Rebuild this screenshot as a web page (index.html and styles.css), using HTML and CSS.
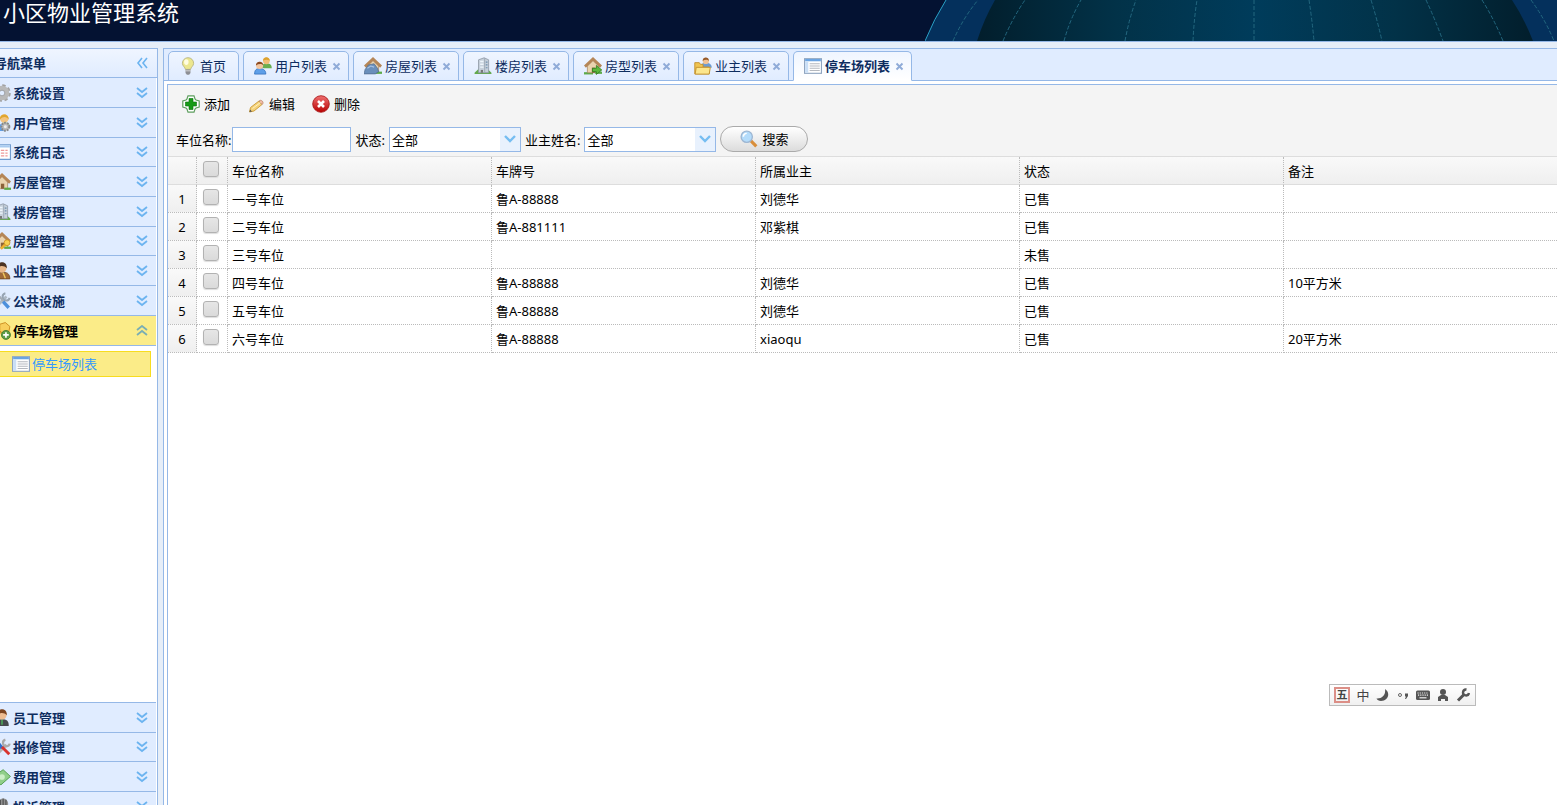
FILE: index.html
```html
<!DOCTYPE html>
<html lang="zh-CN">
<head>
    <meta charset="UTF-8">
    <meta name="viewport" content="width=device-width, initial-scale=1.0">
    <title>小区物业管理系统</title>
    <link rel="stylesheet" href="styles.css">
</head>
<body>

    <!-- shared icons -->
    <svg class="sprite" aria-hidden="true">
        <defs>
            <linearGradient id="redBall" x1="0" y1="0" x2="0" y2="1">
                <stop offset="0" stop-color="#f07070"/>
                <stop offset="1" stop-color="#b80000"/>
            </linearGradient>
            <linearGradient id="globeFill">
                <stop offset="0" stop-color="#021e2c"/>
                <stop offset="0.25" stop-color="#023248"/>
                <stop offset="0.5" stop-color="#003c5b"/>
                <stop offset="0.75" stop-color="#023248"/>
                <stop offset="1" stop-color="#021e2c"/>
            </linearGradient>
        </defs>
        <symbol id="down" viewBox="0 0 12 12"><path d="M1 1l5 4 5-4M1 6l5 4 5-4" fill="none" stroke="#6cb4f0" stroke-width="1.8"/></symbol>
        <symbol id="up" viewBox="0 0 12 12"><path d="M1 5l5-4 5 4M1 10l5-4 5 4" fill="none" stroke="#79aeb4" stroke-width="1.8"/></symbol>
        <symbol id="left" viewBox="0 0 12 12"><path d="M6 1L2 6l4 5M11 1L7 6l4 5" fill="none" stroke="#6cb4f0" stroke-width="1.6"/></symbol>
        <symbol id="arrow" viewBox="0 0 12 12"><path d="M1 3l5 5 5-5" fill="none" stroke="#75bdf2" stroke-width="2.4"/></symbol>
        <symbol id="close" viewBox="0 0 9 9"><path d="M1.500 1.500l6 6M7.500 1.500l-6 6" stroke="#8fabd8" stroke-width="1.900"/></symbol>
        <symbol id="bulb" viewBox="0 0 16 16">
            <path d="M8 .6a5 5 0 0 0-5 5c0 2.400 2.500 3.400 2.700 5.400h4.600c.2-2 2.700-3 2.700-5.400a5 5 0 0 0-5-5z" fill="#ece78f" stroke="#b9b680" stroke-width=".8"/>
            <ellipse cx="6.500" cy="4.500" rx="2" ry="2.500" fill="#fffde0"/>
            <path d="M5.800 11h4.400v3.200L9 15.700H7l-1.200-1.500z" fill="#8d8f94"/>
            <path d="M5.800 12.300h4.400" stroke="#ddd" stroke-width=".8"/>
        </symbol>
        <symbol id="users" viewBox="0 0 16 16">
            <path d="M7 9.500c0-3 2-4 4-4s4.800.5 4.800 4.500H9z" fill="#69ae50"/>
            <circle cx="11" cy="3.400" r="3" fill="#f1bd77"/><path d="M8 3.400C8-.9 14-.9 14 3.400 12.500 2 10 2 8 3.400z" fill="#dca22e"/>
            <path d="M.5 15.200c0-4 2-5 4.500-5s5.500 1 5.500 5z" fill="#5e9fe8" stroke="#2f6fbd" stroke-width=".7"/>
            <circle cx="5" cy="7.500" r="3.200" fill="#f3c6a0"/><path d="M1.700 7.500C1.500 3 8.500 3 8.300 7.500 7 5.800 4 5.800 1.700 7.500z" fill="#8a4a22"/>
        </symbol>
        <symbol id="house" viewBox="0 0 16 16">
            <path d="M3 8l5-5 5 5v6H3z" fill="#ead3ae" stroke="#9d7e58" stroke-width=".6"/>
            <path d="M.8 8.500L8 1.800l7.200 6.700" fill="none" stroke="#b58657" stroke-width="2.600"/>
            <path d="M7 9.500h3V14H7z" fill="#8b6239"/>
            <path d="M10 13h6v2h-6z" fill="#5dab48"/>
        </symbol>
        <symbol id="houseBlue" viewBox="0 0 16 16">
            <use href="#house"/>
            <path d="M0 15l1-4 3-4 5-1 3 4 1 3-3 2z" fill="#6a8fbb" stroke="#4a6688" stroke-width=".6"/>
            <path d="M3 10l3-2 3 1" fill="none" stroke="#a9c2e0"/>
        </symbol>
        <symbol id="houseGo" viewBox="0 0 16 16">
            <path d="M0 13.500h8v2H0z" fill="#5dab48"/>
            <use href="#house"/>
            <path d="M7.500 10h3.500V7.500l4.800 4-4.800 4V13H7.500z" fill="#5cb83c" stroke="#2f7c1c" stroke-width=".7"/>
        </symbol>
        <symbol id="houseKey" viewBox="0 0 16 16">
            <use href="#house"/>
            <path d="M7 15l5-5" stroke="#eeb02c" stroke-width="2.200"/><circle cx="12.500" cy="9.500" r="2.600" fill="#f8cf4e" stroke="#c78a1a" stroke-width=".7"/>
        </symbol>
        <symbol id="building" viewBox="0 0 16 16">
            <path d="M.5 14l3-3h9l3 3v1H.5z" fill="#63a94d"/>
            <path d="M4 2.500l5-1.800 4 1.800V14H4z" fill="#c6d0db" stroke="#8c97a3" stroke-width=".7"/>
            <path d="M9.500 1v13" stroke="#9aa6b3" stroke-width=".8"/>
            <path d="M5.500 4h3M5.500 6.500h3M5.500 9h3" stroke="#eef5fc" stroke-width="1.300"/>
            <path d="M10.500 4.500h1.500M10.500 7h1.500M10.500 9.500h1.500" stroke="#6d8dae"/>
            <path d="M6 11.500h2V14H6z" fill="#777"/>
        </symbol>
        <symbol id="folderUser" viewBox="0 0 16 16">
            <path d="M6 9c0-3 2-4 4.500-4s5.300 1 5.300 4.500z" fill="#6e9bd0"/>
            <circle cx="10.500" cy="3.500" r="2.800" fill="#f1c193"/><path d="M7.700 3.500C7.700-.6 13.300-.6 13.300 3.500 12 2 9.500 2 7.700 3.500z" fill="#955a2a"/>
            <path d="M.7 15V5h4l1 1.500h2.300V9h5.500v6z" fill="#f0c450" stroke="#c28e2a" stroke-width=".8"/>
            <path d="M1 15.200l1-6h12.500l-1 6z" fill="#fce68c" stroke="#c28e2a" stroke-width=".8"/>
        </symbol>
        <symbol id="list" viewBox="0 0 16 16">
            <rect x=".5" y="1.500" width="15" height="13" fill="#fff" stroke="#8fa4c0"/>
            <path d="M1 2.800h14" stroke="#6ba4e2" stroke-width="2"/>
            <path d="M1 4h2.800v10H1z" fill="#c9def6"/>
            <path d="M5 6h9M5 8h9M5 10h9M5 12h9" stroke="#b4b8bf" stroke-width=".9"/>
        </symbol>
        <symbol id="gear" viewBox="0 0 16 16">
            <circle cx="8" cy="8" r="6.300" fill="none" stroke="#a2a2a2" stroke-width="3" stroke-dasharray="2.800 2.150"/>
            <circle cx="8" cy="8" r="4.500" fill="none" stroke="#b9b9b9" stroke-width="4"/>
            <circle cx="8" cy="8" r="2.500" fill="#e0ecff" stroke="#8f8f8f" stroke-width=".7"/>
        </symbol>
        <symbol id="userGear" viewBox="0 0 16 16">
            <path d="M0 15c0-5 3-6 6-6s5 1 5 6z" fill="#5e9fe8"/>
            <path d="M8 8c4-1 7 0 7 4H8z" fill="#69ae50"/>
            <circle cx="10" cy="4" r="3.800" fill="#f3c480"/><path d="M6 5C6-1 14-1 14 5 12 2 9 2 6 5z" fill="#e0a630"/>
            <circle cx="11" cy="11.300" r="3.500" fill="#bbb" stroke="#888" stroke-width="1.800" stroke-dasharray="1.500 1"/>
            <circle cx="11" cy="11.300" r="1.300" fill="#eee"/>
        </symbol>
        <symbol id="log" viewBox="0 0 16 16">
            <path d="M.5 1.500h15v13H.5z" fill="#fff" stroke="#6f9bd0"/>
            <path d="M1 3h14" stroke="#a9cbf0" stroke-width="2"/>
            <path d="M3 6.500h10M3 9h10M3 11.500h10" stroke="#e99" stroke-width="1.200" stroke-dasharray="3 1"/>
        </symbol>
        <symbol id="owner" viewBox="0 0 16 16">
            <path d="M1 15c0-5 3-6 7-6s7 1 7 6z" fill="#a06a38" stroke="#6e431c" stroke-width=".7"/>
            <circle cx="8" cy="5.500" r="4" fill="#eab98a"/><path d="M3.700 5.500C3-1.500 13-1.500 12.300 5.500 10 3 6 3 3.700 5.500z" fill="#4c3322"/>
            <path d="M9 9.500l2 5" stroke="#edc65c" stroke-width="1.300"/>
        </symbol>
        <symbol id="tools" viewBox="0 0 16 16">
            <path d="M2 14L12 4" stroke="#aeb9c4" stroke-width="2.400"/>
            <path d="M11 1.200a3.200 3.200 0 1 0 3.800 4" fill="none" stroke="#97a4b2" stroke-width="1.800"/>
            <path d="M4 2l6 7" stroke="#a5adb6" stroke-width="1.800"/><path d="M9 8.500l5 5.500" stroke="#4b8fdc" stroke-width="3"/>
        </symbol>
        <symbol id="keyAdd" viewBox="0 0 16 16">
            <path d="M1 14l7-7" stroke="#e8ab2c" stroke-width="3"/>
            <path d="M6 2l5-1.500L15 4l-1 5-4 2-4-3z" fill="#f8cf5c" stroke="#c98a1c" stroke-width=".8"/>
            <circle cx="11.500" cy="11.500" r="4" fill="#5d9d46" stroke="#38732a" stroke-width=".7"/><path d="M9 11.500h5M11.500 9v5" stroke="#fff" stroke-width="1.500"/>
        </symbol>
        <symbol id="staff" viewBox="0 0 16 16">
            <path d="M1 15c0-5 3-6 7-6s6 1 6 6z" fill="#474a4e"/>
            <circle cx="8" cy="5.500" r="4" fill="#eebc91"/><path d="M3.700 5.500C3-1.500 13-1.500 12.300 5.500 10 3 6 3 3.700 5.500z" fill="#7d4420"/>
            <path d="M8 9.500V14" stroke="#4da35a" stroke-width="1.500"/>
        </symbol>
        <symbol id="repair" viewBox="0 0 16 16">
            <path d="M3 15L12 6" stroke="#b5b5b5" stroke-width="2.400"/>
            <path d="M11 1.500a3 3 0 1 0 3.800 3.500" fill="none" stroke="#aaa" stroke-width="2"/>
            <path d="M5 5l3 4" stroke="#2f6fd0" stroke-width="3"/><path d="M8 8l6.500 6.500" stroke="#d8342e" stroke-width="2.600"/>
        </symbol>
        <symbol id="money" viewBox="0 0 16 16">
            <path d="M0 8l9-6.500 6.500 6L7 15z" fill="#91cf8a" stroke="#4d9b48" stroke-width=".8"/>
            <circle cx="8" cy="8" r="2.500" fill="#cdeec7"/>
        </symbol>
        <symbol id="complain" viewBox="0 0 16 16">
            <path d="M3 15c0-4 2-6 6-6s6 2 6 6z" fill="#777"/>
            <circle cx="9" cy="5" r="4.500" fill="#909090"/><path d="M9 .5v9M6.500 1.500v7M11.500 1.500v7" stroke="#484848" stroke-width=".9"/>
        </symbol>
        <symbol id="add" viewBox="0 0 18 18">
            <path d="M6 .8h6l1 3.200 1 1 3.200 1v6L14 13l-1 1-1 3.200H6L5 14l-1-1-3.200-1V6L4 5l1-1z" fill="#fff" stroke="#5f9f5f" stroke-width="1.200"/>
            <path d="M7 3.500h4V7h3.500v4H11v3.500H7V11H3.500V7H7z" fill="#169a16" stroke="#08720a" stroke-width=".6"/>
        </symbol>
        <symbol id="pencil" viewBox="0 0 18 18">
            <path d="M2.500 17l1-4.500L12 6l3 3.500-8 6.500z" fill="#f4d27a" stroke="#c99834" stroke-width=".9"/>
            <path d="M12 6l3 3.500 1-1.200c.5-1.500-1.300-3.300-2.800-3z" fill="#f2b9a8" stroke="#bd8a6a" stroke-width=".8"/>
            <path d="M5.500 13.500l8-6" stroke="#fff0bd"/><path d="M2.500 17l.6-2.500 1.900 2z" fill="#555"/>
        </symbol>
        <symbol id="delete" viewBox="0 0 18 18">
            <circle cx="9" cy="9" r="8.300" fill="url(#redBall)" stroke="#a51010" stroke-width=".8"/>
            <path d="M6 6l6 6M12 6l-6 6" stroke="#fff" stroke-width="2.600"/>
        </symbol>
        <symbol id="search" viewBox="0 0 16 16">
            <path d="M9.500 9.500l5 5" stroke="#d98e3a" stroke-width="2.800"/>
            <circle cx="6" cy="6" r="5" fill="#b4dcfb" stroke="#9db6d2" stroke-width="1.200"/>
            <path d="M3 6a3 3 0 0 1 3-3" fill="none" stroke="#fff" stroke-width="1.300"/>
        </symbol>
    </svg>

    <header class="header">
        <h1>小区物业管理系统</h1>
        <svg class="globe" viewBox="0 0 632 41" aria-hidden="true">
            <path d="M0 41Q9 19 21 0H632V41z" fill="#04305c"/>
            <path d="M0 41Q9 19 21 0" fill="none" stroke="#2a9fc4"/>
            <path d="M52 41Q59 19 70 0H587Q599 18 608 41z" fill="url(#globeFill)"/>
            <path d="M28 41Q38 18 53 0M78 41Q87 19 100 0M139 41Q145 19 156 0M200 41Q204 19 211 0M268 41Q269 19 272 0M329 0V41M384 0Q387 19 389 41M446 0Q452 19 457 41M501 0Q510 19 518 41M557 0Q569 19 578 41M606 0Q620 19 629 41" fill="none" stroke="#23677f" stroke-dasharray="4 2"/>
        </svg>
    </header>

    <div class="layout">
        <nav class="sidebar">
            <div class="sidebar-title">导航菜单<svg class="chevron"><use href="#left"/></svg></div>
            <div class="accordion">
                <button class="item"><svg class="icon"><use href="#gear"/></svg>系统设置<svg class="chevron"><use href="#down"/></svg></button>
                <button class="item"><svg class="icon"><use href="#userGear"/></svg>用户管理<svg class="chevron"><use href="#down"/></svg></button>
                <button class="item"><svg class="icon"><use href="#log"/></svg>系统日志<svg class="chevron"><use href="#down"/></svg></button>
                <button class="item"><svg class="icon"><use href="#house"/></svg>房屋管理<svg class="chevron"><use href="#down"/></svg></button>
                <button class="item"><svg class="icon"><use href="#building"/></svg>楼房管理<svg class="chevron"><use href="#down"/></svg></button>
                <button class="item"><svg class="icon"><use href="#houseKey"/></svg>房型管理<svg class="chevron"><use href="#down"/></svg></button>
                <button class="item"><svg class="icon"><use href="#owner"/></svg>业主管理<svg class="chevron"><use href="#down"/></svg></button>
                <button class="item"><svg class="icon"><use href="#tools"/></svg>公共设施<svg class="chevron"><use href="#down"/></svg></button>
                <button class="item selected"><svg class="icon"><use href="#keyAdd"/></svg>停车场管理<svg class="chevron"><use href="#up"/></svg></button>
                <div class="submenu">
                    <a href="#"><svg class="icon"><use href="#list"/></svg>停车场列表</a>
                </div>
                <button class="item"><svg class="icon"><use href="#staff"/></svg>员工管理<svg class="chevron"><use href="#down"/></svg></button>
                <button class="item"><svg class="icon"><use href="#repair"/></svg>报修管理<svg class="chevron"><use href="#down"/></svg></button>
                <button class="item"><svg class="icon"><use href="#money"/></svg>费用管理<svg class="chevron"><use href="#down"/></svg></button>
                <button class="item"><svg class="icon"><use href="#complain"/></svg>投诉管理<svg class="chevron"><use href="#down"/></svg></button>
            </div>
        </nav>

        <main class="center">
            <div class="tabs">
                <button class="tab home"><svg class="icon"><use href="#bulb"/></svg>首页</button>
                <button class="tab"><svg class="icon"><use href="#users"/></svg>用户列表<svg class="close"><use href="#close"/></svg></button>
                <button class="tab"><svg class="icon"><use href="#houseBlue"/></svg>房屋列表<svg class="close"><use href="#close"/></svg></button>
                <button class="tab"><svg class="icon"><use href="#building"/></svg>楼房列表<svg class="close"><use href="#close"/></svg></button>
                <button class="tab"><svg class="icon"><use href="#houseGo"/></svg>房型列表<svg class="close"><use href="#close"/></svg></button>
                <button class="tab"><svg class="icon"><use href="#folderUser"/></svg>业主列表<svg class="close"><use href="#close"/></svg></button>
                <button class="tab active"><svg class="icon"><use href="#list"/></svg>停车场列表<svg class="close"><use href="#close"/></svg></button>
            </div>

            <div class="content">
                <div class="panel">
                    <div class="toolbar">
                        <div class="actions">
                            <button class="action"><svg class="icon"><use href="#add"/></svg>添加</button>
                            <button class="action"><svg class="icon"><use href="#pencil"/></svg>编辑</button>
                            <button class="action"><svg class="icon"><use href="#delete"/></svg>删除</button>
                        </div>
                        <form class="filters" onsubmit="return false">
                            <div class="field name-field">
                                <label for="carportName">车位名称:</label>
                                <input type="text" id="carportName">
                            </div>
                            <div class="field">
                                <label for="status">状态:</label>
                                <div class="combo">
                                    <select id="status"><option>全部</option><option>已售</option><option>未售</option></select>
                                    <svg><use href="#arrow"/></svg>
                                </div>
                            </div>
                            <div class="field">
                                <label for="owner-name">业主姓名:</label>
                                <div class="combo">
                                    <select id="owner-name"><option>全部</option></select>
                                    <svg><use href="#arrow"/></svg>
                                </div>
                            </div>
                            <button class="search-btn"><svg class="icon"><use href="#search"/></svg>搜索</button>
                        </form>
                    </div>

                    <table class="grid">
                        <colgroup>
                            <col class="col-num"><col class="col-check"><col class="col-data"><col class="col-data"><col class="col-data"><col class="col-data"><col>
                        </colgroup>
                        <thead>
                            <tr>
                                <th></th>
                                <th><input type="checkbox" aria-label="全选"></th>
                                <th>车位名称</th>
                                <th>车牌号</th>
                                <th>所属业主</th>
                                <th>状态</th>
                                <th>备注</th>
                            </tr>
                        </thead>
                        <tbody>
                            <tr><td>1</td><td><input type="checkbox" aria-label="1"></td><td>一号车位</td><td>鲁A-88888</td><td>刘德华</td><td>已售</td><td></td></tr>
                            <tr><td>2</td><td><input type="checkbox" aria-label="2"></td><td>二号车位</td><td>鲁A-881111</td><td>邓紫棋</td><td>已售</td><td></td></tr>
                            <tr><td>3</td><td><input type="checkbox" aria-label="3"></td><td>三号车位</td><td></td><td></td><td>未售</td><td></td></tr>
                            <tr><td>4</td><td><input type="checkbox" aria-label="4"></td><td>四号车位</td><td>鲁A-88888</td><td>刘德华</td><td>已售</td><td>10平方米</td></tr>
                            <tr><td>5</td><td><input type="checkbox" aria-label="5"></td><td>五号车位</td><td>鲁A-88888</td><td>刘德华</td><td>已售</td><td></td></tr>
                            <tr><td>6</td><td><input type="checkbox" aria-label="6"></td><td>六号车位</td><td>鲁A-88888</td><td>xiaoqu</td><td>已售</td><td>20平方米</td></tr>
                        </tbody>
                    </table>
                </div>
            </div>
        </main>
    </div>

    <!-- input method bar -->
    <div class="ime">
        <span class="ime-logo">五</span>
        <span class="ime-mode">中</span>
        <svg viewBox="0 0 14 14"><path d="M9 1c6 4 3 12-4 12-2 0-4-1-4.500-2.500C6 11 10 7 9 1z" fill="#555"/></svg>
        <svg viewBox="0 0 14 14"><circle cx="4" cy="7" r="1.500" fill="none" stroke="#666"/><path d="M9 5.500h3V8l-2 3H9l1-2.500H9z" fill="#555"/></svg>
        <svg viewBox="0 0 14 14"><rect x="0" y="2.500" width="14" height="9.500" rx="1.500" fill="#555"/><path d="M1.500 5h11M2 7.200h11" stroke="#eee" stroke-width="1.200" stroke-dasharray="1.200 1"/><path d="M3.500 9.800h7" stroke="#eee" stroke-width="1.200"/></svg>
        <svg viewBox="0 0 14 14"><circle cx="7" cy="4" r="3" fill="#555"/><path d="M2 13V9l3-2h4l3 2v4H9v-2H5v2z" fill="#555"/></svg>
        <svg viewBox="0 0 14 14"><path d="M2 12.500l6-6" stroke="#555" stroke-width="3"/><path d="M10.500 1.500a3 3 0 1 0 2.500 3.500" fill="none" stroke="#555" stroke-width="2.400"/></svg>
    </div>

</body>
</html>
```
FILE: styles.css
```css
* {
    box-sizing: border-box;
}

body {
    margin: 0;
    height: 100vh;
    overflow: hidden;
    display: flex;
    flex-direction: column;
    background-color: #fff;
    color: #000;
    font: 13px/18px "Noto Sans", "Noto Sans CJK SC", sans-serif;
}

button, input, select {
    font: inherit;
    color: inherit;
    margin: 0;
}

button {
    cursor: pointer;
}

svg {
    flex: none;
}

.sprite {
    position: absolute;
    width: 0;
    height: 0;
}

.icon {
    width: 18px;
    height: 18px;
}

/* Header */
.header {
    flex: none;
    height: 42px;
    display: flex;
    justify-content: space-between;
    background-color: #041232;
    border-bottom: 1px solid #95b8e7;
    overflow: hidden;
}

.header h1 {
    margin: 0;
    padding-left: 3px;
    color: #fff;
    font-size: 22px;
    font-weight: normal;
    line-height: 24px;
}

.globe {
    width: 632px;
    height: 41px;
}

/* Layout */
.layout {
    flex: 1;
    min-height: 0;
    display: flex;
    gap: 5px;
    padding-top: 6px;
    background-color: #e6eef8;
}

/* Sidebar */
.sidebar {
    flex: none;
    width: 170px;
    margin-left: -12px;
    display: flex;
    flex-direction: column;
    background-color: #fff;
    border: 1px solid #95b8e7;
    border-bottom: none;
}

.sidebar-title {
    flex: none;
    height: 29px;
    display: flex;
    align-items: center;
    padding: 0 9px 0 5px;
    background: linear-gradient(to bottom, #eff5ff, #e0ecff);
    border-bottom: 1px solid #95b8e7;
    color: #0e2d5f;
    font-weight: bold;
}

.chevron {
    width: 12px;
    height: 12px;
    margin-left: auto;
}

.accordion {
    flex: 1;
    min-height: 0;
    margin-right: 1px;
    overflow: hidden;
}

.item {
    width: 100%;
    height: 30px;
    display: flex;
    align-items: center;
    padding: 0 8px 0 4px;
    background-color: #e0ecff;
    border: none;
    border-bottom: 1px solid #95b8e7;
    color: #0e2d5f;
    font-weight: bold;
}

.item:nth-child(3n) {
    height: 29px;
}

.item.selected {
    height: 30px;
    background-color: #fbec88;
    color: #000;
}

.item .icon {
    margin-right: 2px;
}

.submenu {
    height: calc(100vh - 448px);
    padding: 5px 5px 0 0;
    border-bottom: 1px solid #95b8e7;
}

.submenu a {
    height: 26px;
    display: flex;
    align-items: center;
    gap: 2px;
    padding-left: 22px;
    background-color: #fbec88;
    border: 1px solid #f7dc1f;
    color: #3399ff;
    text-decoration: none;
}

/* Tabs */
.center {
    flex: 1;
    min-width: 0;
    display: flex;
    flex-direction: column;
    background-color: #fff;
    border-top: 1px solid #95b8e7;
    border-left: 1px solid #95b8e7;
}

.tabs {
    flex: none;
    height: 32px;
    display: flex;
    gap: 4px;
    padding: 2px 0 0 4px;
    background-color: #e0ecff;
    border-bottom: 1px solid #95b8e7;
}

.tab {
    height: 30px;
    display: flex;
    align-items: center;
    padding: 0 7px 0 10px;
    background: linear-gradient(to bottom, #eff5ff, #e0ecff);
    border: 1px solid #95b8e7;
    border-radius: 5px 5px 0 0;
    color: #0e2d5f;
    white-space: nowrap;
}

.tab.home {
    padding-right: 12px;
}

.tab.active {
    background: linear-gradient(to bottom, #eff5ff, #fff);
    border-bottom-color: #fff;
    font-weight: bold;
}

.tab .icon {
    margin-right: 3px;
}

.close {
    width: 9px;
    height: 9px;
    margin-left: 5px;
}

/* Content */
.content {
    flex: 1;
    padding: 3px 0 0 3px;
}

.panel {
    height: 100%;
    border-top: 1px solid #95b8e7;
    border-left: 1px solid #95b8e7;
}

.toolbar {
    height: 71px;
    padding: 8px 8px 0;
    background-color: #f4f4f4;
}

.actions {
    display: flex;
    gap: 17px;
    padding-left: 6px;
}

.action {
    height: 22px;
    display: flex;
    align-items: center;
    gap: 4px;
    padding: 0;
    background: none;
    border: none;
}

.filters {
    display: flex;
    align-items: flex-end;
    gap: 4px;
    margin-top: 11px;
}

.field {
    display: flex;
    align-items: center;
    gap: 4px;
}

.name-field {
    gap: 1px;
}

.field input {
    width: 119px;
    height: 25px;
    padding: 0 3px;
    background-color: #fff;
    border: 1px solid #95b8e7;
}

.combo {
    position: relative;
}

.combo select {
    display: block;
    width: 132px;
    height: 25px;
    padding: 0 24px 0 2px;
    background: linear-gradient(#e8f1fd, #e8f1fd) right / 20px 100% no-repeat #fff;
    border: 1px solid #95b8e7;
    border-radius: 0;
    appearance: none;
}

.combo svg {
    position: absolute;
    top: 6px;
    right: 5px;
    width: 12px;
    height: 12px;
    pointer-events: none;
}

.search-btn {
    width: 88px;
    height: 26px;
    display: flex;
    align-items: center;
    justify-content: center;
    gap: 4px;
    padding: 0;
    background: linear-gradient(to bottom, #fff, #dcdcdc);
    border: 1px solid #aaa;
    border-radius: 13px;
}

/* Data grid */
.grid {
    width: 100%;
    table-layout: fixed;
    border-collapse: separate;
    border-spacing: 0;
    border-top: 1px solid #ddd;
}

.col-num {
    width: 29px;
}

.col-check {
    width: 31px;
}

.col-data {
    width: 264px;
}

.grid th, .grid td {
    height: 28px;
    padding: 0 4px;
    border-right: 1px dotted #bbb;
    border-bottom: 1px dotted #bbb;
    font-weight: normal;
    text-align: left;
}

.grid th {
    background: linear-gradient(to bottom, #f9f9f9, #efefef);
    border-bottom: 1px solid #ddd;
}

.grid th:last-child, .grid td:last-child {
    border-right: none;
}

.grid td:first-child {
    padding: 0;
    background: linear-gradient(to bottom, #f9f9f9, #efefef);
    text-align: center;
}

.grid th:nth-child(2), .grid td:nth-child(2) {
    padding: 0 0 4px 6px;
}

.grid input {
    display: block;
    width: 16px;
    height: 16px;
    margin: 0;
    background: linear-gradient(to bottom, #e6e6e6, #dadada);
    border: 1px solid #b2b2b2;
    border-radius: 3px;
    box-shadow: 0 1px 1px #ddd;
    appearance: none;
}

/* Input method bar */
.ime {
    position: fixed;
    right: 81px;
    bottom: 99px;
    height: 22px;
    display: flex;
    align-items: center;
    gap: 6px;
    padding: 0 5px 0 4px;
    background: linear-gradient(to bottom, #fff, #f0f0f0);
    border: 1px solid #bbb;
    color: #444;
}

.ime svg {
    width: 14px;
    height: 14px;
}

.ime-logo {
    width: 16px;
    height: 16px;
    border: 2px solid #dc8f87;
    font-size: 11px;
    font-weight: bold;
    line-height: 12px;
    text-align: center;
}

.ime-mode {
    width: 14px;
    text-align: center;
}
```
